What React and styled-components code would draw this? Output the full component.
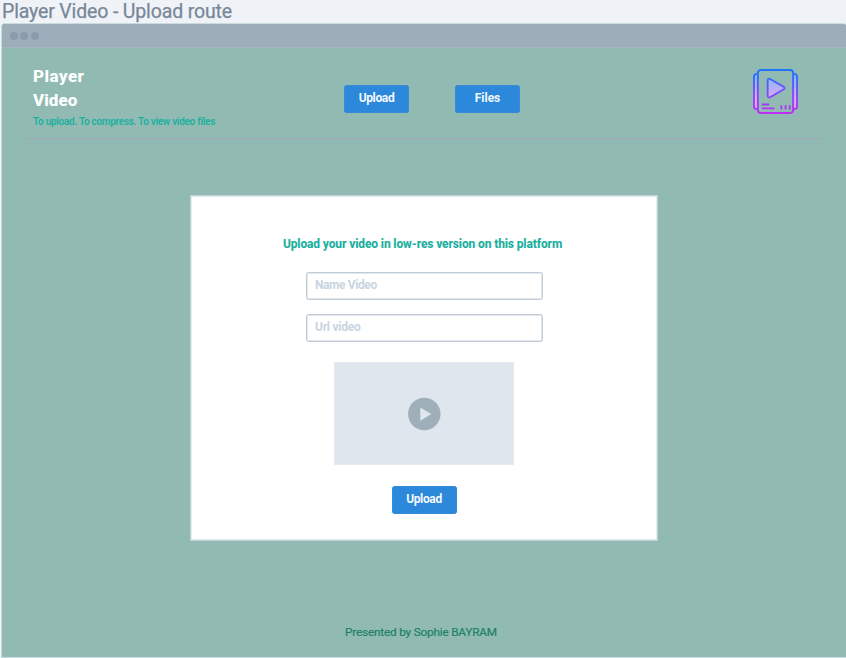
import React from "react";
import styled, { createGlobalStyle } from "styled-components";

const GlobalStyle = createGlobalStyle`
  *, *::before, *::after { box-sizing: border-box; }
  body {
    margin: 0;
    background: #eff3f7;
    font-family: Roboto, "Liberation Sans", sans-serif;
    overflow: hidden;
  }
`;

const Screen = styled.div`
  width: 846px;
  height: 658px;
  display: flex;
  flex-direction: column;
  overflow: hidden;
  white-space: nowrap;
`;

const RouteTitle = styled.div`
  height: 24px;
  flex: none;
  padding: 0 0 0 2px;
  font-size: 19.5px;
  line-height: 24px;
  letter-spacing: -0.15px;
  -webkit-text-stroke: 0.25px #788797;
  color: #788797;
`;

const BrowserFrame = styled.div`
  height: 633px;
  margin-left: 2px;
  box-shadow: 0 0 0 1px #cbdcdf;
  border-radius: 3px 3px 0 0;
  background: #91bbb2;
  display: flex;
  flex-direction: column;
  overflow: hidden;
`;

const TitleBar = styled.div`
  height: 24px;
  flex: none;
  display: flex;
  align-items: center;
  gap: 2.5px;
  padding-left: 7.5px;
  background: #9eadba;
  border-bottom: 1px solid #a3b8c1;
`;

const WindowDot = styled.span`
  width: 8px;
  height: 8px;
  border-radius: 50%;
  background: #8b9bab;
`;

const Header = styled.header`
  height: 91px;
  flex: none;
  margin: 0 21px 0 22px;
  padding: 17px 27px 0 9px;
  border-bottom: 1px solid #9baeb6;
  box-shadow: 0 0.5px 0 #9baeb6;
  display: grid;
  grid-template-columns: 311px 1fr 45px;
`;

const BrandName = styled.h1`
  margin: -1px 0 1px;
  font-size: 17px;
  line-height: 24px;
  font-weight: 800;
  color: #fff;
`;

const BrandLine = styled.span`
  display: block;
  letter-spacing: ${(p) => p.$tracking};
`;

const Tagline = styled.p`
  margin: 0;
  font-size: 10px;
  line-height: 17px;
  font-weight: 600;
  letter-spacing: -0.29px;
  color: #1db0a0;
`;

const Nav = styled.nav`
  display: flex;
  align-items: flex-start;
  gap: 46px;
  padding-top: 20px;
`;

const Button = styled.button`
  width: 65px;
  height: 28px;
  padding: 0 0 3px;
  border: 1px solid #348bd6;
  border-radius: 2.5px;
  background: #2b88db;
  color: #f4f9fe;
  font: 700 12px/24px Roboto, sans-serif;
  letter-spacing: ${(p) => p.$tracking || "0"};
`;

const LogoSvg = styled.svg`
  display: block;
  margin-top: 4px;
`;

const Main = styled.main`
  flex: 1;
  display: flex;
  flex-direction: column;
  align-items: center;
  padding: 56px 0 0 0;
`;

const UploadCard = styled.section`
  width: 468px;
  height: 346px;
  border: 1px solid #bfd2d7;
  box-shadow: inset 0 0 0 0.5px #c8d6dd;
  background: #fff;
  display: flex;
  flex-direction: column;
  align-items: center;
  padding-top: 38px;
`;

const CardHeading = styled.h2`
  margin: 0 0 17px;
  padding-right: 3px;
  font-size: 12px;
  line-height: 21px;
  font-weight: 800;
  letter-spacing: -0.13px;
  color: #1db0a0;
`;

const Field = styled.input`
  width: 237px;
  height: 28px;
  margin-bottom: 14px;
  padding: 0 8.5px 2px;
  border: 1px solid #bfccd6;
  box-shadow: inset 0 0 0 0.5px #c6d1db;
  border-radius: 2.5px;
  outline: none;
  background: #fff;
  font: 700 12px Roboto, sans-serif;
  letter-spacing: ${(p) => p.$tracking || "0"};
  &::placeholder { color: #c9d5df; opacity: 1; }
`;

const VideoPreview = styled.div`
  width: 180px;
  height: 103px;
  margin: 6px 0 21px;
  border: 1px solid #e4eaf0;
  background: #dfe6ee;
  display: flex;
  align-items: center;
  justify-content: center;
`;

const Footer = styled.footer`
  padding: 81px 6px 0 0;
  font-size: 11.8px;
  line-height: 20px;
  letter-spacing: -0.2px;
  -webkit-text-stroke: 0.2px #208069;
  color: #208069;
`;

function Logo() {
  return (
    <LogoSvg width="45" height="45" viewBox="0 0 46 46" fill="none">
      <defs>
        <linearGradient id="edge" gradientUnits="userSpaceOnUse" x1="0" y1="0" x2="0" y2="46">
          <stop stopColor="#1b75ff" />
          <stop offset="1" stopColor="#c42bf7" />
        </linearGradient>
        <linearGradient id="glow" gradientUnits="userSpaceOnUse" x1="0" y1="7" x2="0" y2="30">
          <stop stopColor="#7dbdfb" />
          <stop offset="1" stopColor="#e1a5f4" />
        </linearGradient>
      </defs>
      <g stroke="url(#edge)" strokeWidth="1.9">
        <path d="M5 5H4Q1 5 1 8V38Q1 41 4 41H5M41 5H42Q45 5 45 8V38Q45 41 42 41H41" fill="url(#glow)" />
        <rect x="5" y="1" width="36" height="44" rx="3" fill="#91bbb2" />
        <path d="M15 11.5Q15 9 17.5 10.2L31.5 18.3Q33.2 19.5 31.5 20.7L18 28.6Q15 30 15 27Z" fill="url(#glow)" strokeLinejoin="round" />
        <path d="M9 36.3H16.5M9 40.3H22M29 37V41.5M33.3 37V41.5M37.5 37V41.5" />
      </g>
    </LogoSvg>
  );
}

function PlayIcon() {
  return (
    <svg width="34" height="34" viewBox="0 0 34 34">
      <circle cx="17.3" cy="17" r="16.2" fill="#9eafba" />
      <path d="M13.3 10.5L24.3 17L13.3 23.8Z" fill="#dfe6ee" />
    </svg>
  );
}

export default function App() {
  return (
    <Screen>
      <GlobalStyle />
      <RouteTitle>Player Video - Upload route</RouteTitle>
      <BrowserFrame>
        <TitleBar>
          <WindowDot />
          <WindowDot />
          <WindowDot />
        </TitleBar>
        <Header>
          <div>
            <BrandName>
              <BrandLine $tracking="0.45px">Player</BrandLine>
              <BrandLine $tracking="0.05px">Video</BrandLine>
            </BrandName>
            <Tagline>To upload. To compress. To view video files</Tagline>
          </div>
          <Nav>
            <Button $tracking="-0.35px">Upload</Button>
            <Button>Files</Button>
          </Nav>
          <Logo />
        </Header>
        <Main>
          <UploadCard>
            <CardHeading>Upload your video in low-res version on this platform</CardHeading>
            <Field placeholder="Name Video" $tracking="-0.4px" />
            <Field placeholder="Url video" $tracking="-0.25px" />
            <VideoPreview>
              <PlayIcon />
            </VideoPreview>
            <Button $tracking="-0.35px">Upload</Button>
          </UploadCard>
          <Footer>Presented by Sophie BAYRAM</Footer>
        </Main>
      </BrowserFrame>
    </Screen>
  );
}
